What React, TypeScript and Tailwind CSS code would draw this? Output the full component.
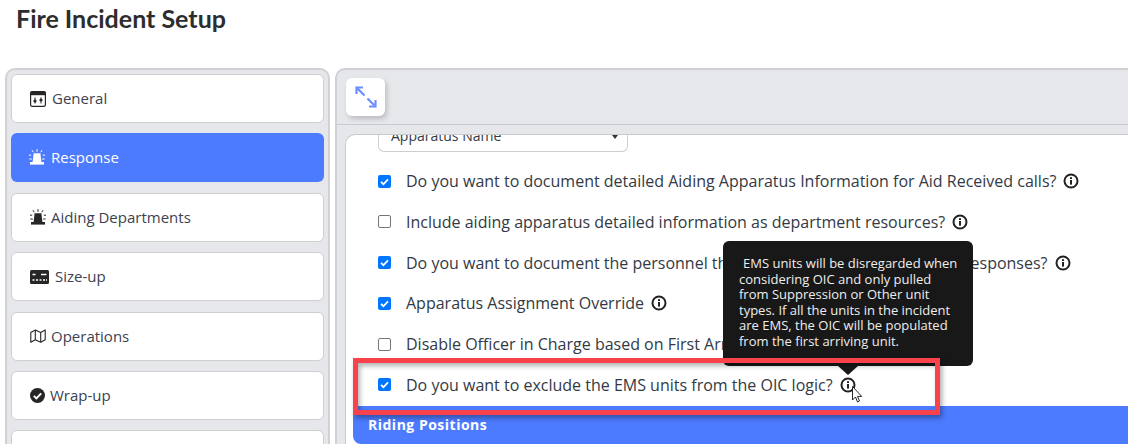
const sans = "font-['Open_Sans',sans-serif]";

function InfoIcon() {
  return (
    <svg className="h-[16px] w-[16px] shrink-0" viewBox="0 0 16 16" fill="none" aria-hidden="true">
      <circle cx="8" cy="8" r="6.5" stroke="#222" strokeWidth="2" />
      <rect x="7" y="7" width="2" height="4.6" fill="#222" />
      <rect x="7" y="4.2" width="2" height="1.8" fill="#222" />
    </svg>
  );
}

function GeneralIcon() {
  return (
    <svg className="h-[16px] w-[16px]" viewBox="0 0 16 16" fill="none" aria-hidden="true">
      <rect x="0.6" y="0.6" width="14.8" height="14.8" rx="1.6" stroke="#262626" strokeWidth="1.2" />
      <rect x="0.6" y="0.6" width="14.8" height="3.6" fill="#262626" />
      <path d="M5 6.5v6M11 6.5v6" stroke="#262626" strokeWidth="1" />
      <circle cx="5" cy="10" r="1.6" fill="#262626" />
      <circle cx="11" cy="9" r="1.6" fill="#262626" />
    </svg>
  );
}

function SirenIcon({ color }: { color: string }) {
  return (
    <svg className="h-[16px] w-[16px]" viewBox="0 0 16 16" fill="none" aria-hidden="true">
      <path d="M4.6 4.2h6.8l1 8.8H3.6z" fill={color} />
      <rect x="1" y="13" width="14" height="2.6" fill={color} />
      <path d="M8 0.2v2.6M3 1.2l1.2 2M13 1.2l-1.2 2M0 6.2h2.2M13.8 6.2H16M0.4 10h2.4M13.2 10h2.4" stroke={color} strokeWidth="1" />
    </svg>
  );
}

function SizeUpIcon() {
  return (
    <svg className="h-[14px] w-[19px]" viewBox="0 0 19 14" aria-hidden="true">
      <rect width="19" height="14" rx="1.5" fill="#262626" />
      <path d="M2.5 4.5h3M11 4.5h5.5" stroke="#fff" strokeWidth="1.5" />
      <path d="M2.5 10h2M6 10h2M9.5 10h2M13 10h2M16 10h1" stroke="#fff" strokeWidth="1.5" />
    </svg>
  );
}

function MapIcon() {
  return (
    <svg className="h-[14px] w-[16px]" viewBox="0 0 16 14" fill="none" stroke="#262626" strokeWidth="1.1" aria-hidden="true">
      <path d="M0.8 3.4 5.3 1l5.4 2.4L15.2 1v9.8l-4.5 2.4-5.4-2.4-4.5 2.4z" strokeLinejoin="round" />
      <path d="M5.3 1v9.8M10.7 3.4v9.8" />
    </svg>
  );
}

function CheckIcon() {
  return (
    <svg className="h-[15px] w-[15px]" viewBox="0 0 15 15" aria-hidden="true">
      <circle cx="7.5" cy="7.5" r="7.5" fill="#262626" />
      <path d="m3.8 7.8 2.6 2.6 4.8-5" fill="none" stroke="#fff" strokeWidth="1.9" />
    </svg>
  );
}

const navItems = [
  { label: "General", icon: <GeneralIcon />, gap: "gap-[6px]" },
  { label: "Response", icon: <SirenIcon color="#ffffff" />, gap: "gap-[6px]", active: true },
  { label: "Aiding Departments", icon: <SirenIcon color="#262626" />, gap: "gap-[5px]" },
  { label: "Size-up", icon: <SizeUpIcon />, gap: "gap-[6px]" },
  { label: "Operations", icon: <MapIcon />, gap: "gap-[5px]" },
  { label: "Wrap-up", icon: <CheckIcon />, gap: "gap-[5px]" },
  { label: "", icon: null, gap: "" },
];

const options = [
  { text: "Do you want to document detailed Aiding Apparatus Information for Aid Received calls?", checked: true },
  { text: "Include aiding apparatus detailed information as department resources?", checked: false },
  { text: "Do you want to document the personnel that responded to the fire station responses?", checked: true },
  { text: "Apparatus Assignment Override", checked: true },
  { text: "Disable Officer in Charge based on First Arriving Unit", checked: false },
  { text: "Do you want to exclude the EMS units from the OIC logic?", checked: true },
];

function Checkbox({ checked }: { checked: boolean }) {
  if (!checked) {
    return <span className="h-[13px] w-[13px] shrink-0 rounded-[2px] border border-[#767676] bg-white" />;
  }
  return (
    <span className="flex h-[13px] w-[13px] shrink-0 items-center justify-center rounded-[2px] bg-[#0075ff]">
      <svg className="h-[11px] w-[11px]" viewBox="0 0 12 12" fill="none" aria-hidden="true">
        <path d="m2.2 6.4 2.6 2.6 5-5.4" stroke="#fff" strokeWidth="2" />
      </svg>
    </span>
  );
}

export default function App() {
  return (
    <div className={`${sans} relative h-[444px] w-[1128px] overflow-hidden bg-white text-[#333a45]`}>
      <h1 className="h-[68px] pl-[16px] pt-[2px] font-['Lato',sans-serif] text-[25px] font-bold leading-[32px] text-[#2d2d2d]">
        Fire Incident Setup
      </h1>

      <div className="flex gap-[5px] pl-[5px]">
        {/* left nav */}
        <aside className="flex h-[376px] w-[325px] shrink-0 flex-col gap-[10.4px] overflow-hidden rounded-t-[10px] border-[2px] border-b-0 border-[#d0d1d5] bg-[#e6e7eb] px-[4px] pt-[4px]">
          {navItems.map((item) => (
            <div
              key={item.label || "more"}
              className={
                item.active
                  ? `flex h-[49px] shrink-0 items-center rounded-[6px] bg-[#4d7bff] pb-[1px] pl-[18px] text-[15px] text-white ${item.gap}`
                  : `flex h-[49px] shrink-0 items-center rounded-[6px] border border-[#cfcfcf] bg-white pl-[18px] text-[15px] text-[#3c4250] ${item.gap}`
              }
            >
              {item.icon}
              <span>{item.label}</span>
            </div>
          ))}
        </aside>

        {/* main panel */}
        <main className="flex h-[376px] min-w-0 flex-1 flex-col overflow-hidden rounded-tl-[10px] border-l-[2px] border-t-[2px] border-[#d0d1d5] bg-[#e6e7eb]">
          <div className="flex h-[55px] shrink-0 items-start border-b border-[#c9cacd] pl-[9px] pt-[8px]">
            <button
              type="button"
              className="flex h-[38px] w-[39px] items-center justify-center rounded-[6px] bg-white shadow-[2px_3px_5px_rgba(0,0,0,0.18)]"
              aria-label="Expand"
            >
              <svg className="h-[22px] w-[22px]" viewBox="0 0 22 22" fill="none" stroke="#6d8dff" strokeWidth="2.2" aria-hidden="true">
                <path d="M2.5 2.5l7 7M12.5 12.5l7 7" />
                <path d="M1.5 8V1.5H8" />
                <path d="M20.5 14v6.5H14" />
              </svg>
            </button>
          </div>

          <div className="ml-[8px] mt-[9px] flex min-h-0 flex-1 flex-col overflow-hidden rounded-tl-[10px] border-l border-t border-[#c9cacd] bg-white">
            <div className="ml-[32px] flex h-[17px] w-[250px] shrink-0 items-end overflow-hidden rounded-b-[6px] border border-t-0 border-[#cfcfcf] pl-[12px] pr-[9px]">
              <span className="mb-[6px] flex-1 text-[14px] leading-[19px]">Apparatus Name</span>
              <span className="mb-[12px] h-0 w-0 border-x-[3.5px] border-t-[4px] border-x-transparent border-t-[#333]" />
            </div>
            <div className="flex flex-col gap-[20.8px] pl-[32px] pt-[19px]">
              {options.map((option) => (
                <div key={option.text} className="flex h-[20px] items-center whitespace-nowrap text-[16px] leading-[20px]">
                  <Checkbox checked={option.checked} />
                  <span className="ml-[15px]">{option.text}</span>
                  <span className="ml-[7px]">
                    <InfoIcon />
                  </span>
                </div>
              ))}
            </div>
            <div className="ml-[7px] mt-[11px] flex h-[38px] shrink-0 items-start rounded-bl-[8px] bg-[#4d7bff] pl-[15px] pt-[9px] text-[14px] font-bold leading-[19px] tracking-[0.5px] text-white">
              Riding Positions
            </div>
          </div>
        </main>
      </div>

      {/* tooltip */}
      <div className="absolute left-[723px] top-[241px] h-[125px] w-[250px] whitespace-nowrap rounded-[6px] bg-[#181818] px-[16px] pt-[15px] text-[13px] font-medium leading-[15.6px] text-[#eeeeee]">
        <span className="ml-[4px]">EMS units will be disregarded when</span>
        <br />
        considering OIC and only pulled
        <br />
        from Suppression or Other unit
        <br />
        types. If all the units in the incident
        <br />
        are EMS, the OIC will be populated
        <br />
        from the first arriving unit.
      </div>
      <div className="absolute left-[838px] top-[366px] h-0 w-0 border-x-[10px] border-t-[9px] border-x-transparent border-t-[#181818]" />

      {/* red annotation */}
      <div className="absolute left-[353px] top-[358px] h-[57px] w-[587px] border-[5px] border-[#f9424b] shadow-[2px_3px_5px_rgba(0,0,0,0.35),inset_2px_3px_5px_rgba(0,0,0,0.3)]" />

      {/* mouse cursor */}
      <svg className="absolute left-[852px] top-[386px] h-[18px] w-[12px]" viewBox="0 0 12 18" aria-hidden="true">
        <path d="M0.5 0.5v13.5l3-3 2 5 2-1-2-4.6h4.2z" fill="#fff" stroke="#111" strokeWidth="0.9" />
      </svg>
    </div>
  );
}
